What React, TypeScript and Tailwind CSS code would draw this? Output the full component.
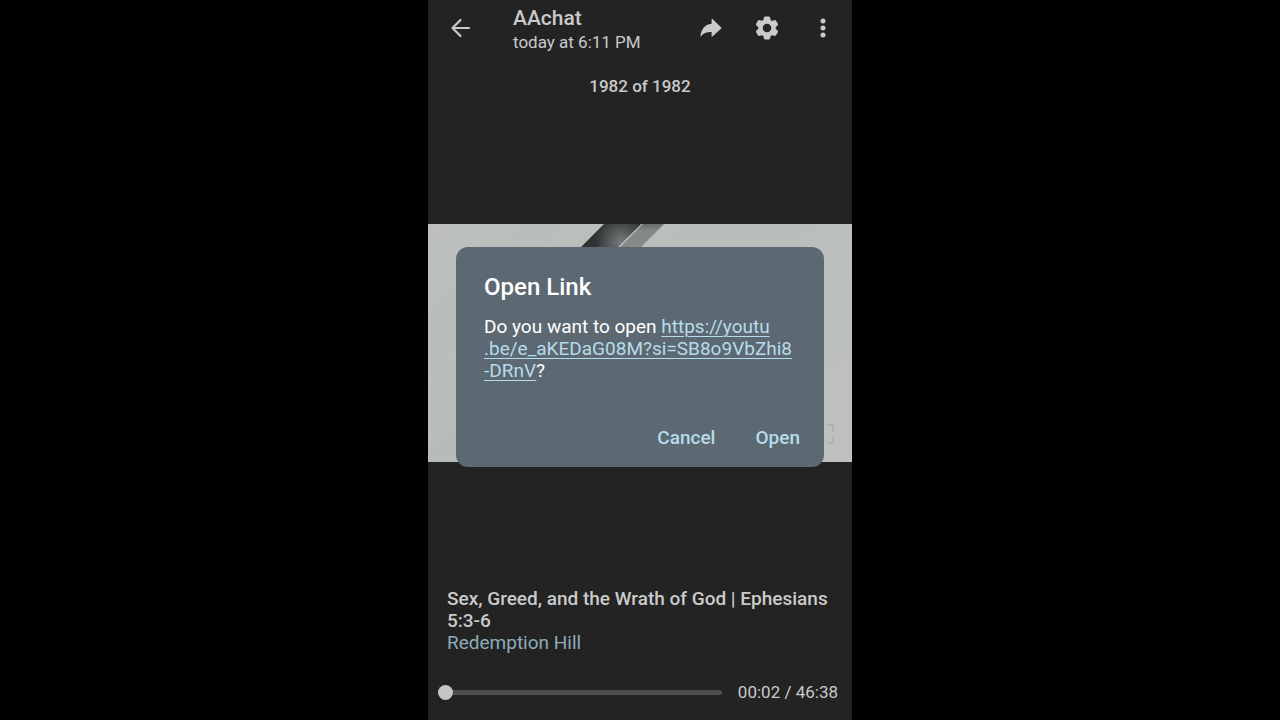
import { useState } from 'react';

const DURATION = 2798;

const formatTime = (seconds: number) => {
  const m = Math.floor(seconds / 60);
  const s = seconds % 60;
  return `${String(m).padStart(2, '0')}:${String(s).padStart(2, '0')}`;
};

function BackIcon() {
  return (
    <svg
      viewBox="0 0 24 24"
      className="w-6 h-6"
      fill="none"
      stroke="currentColor"
      strokeWidth="2.2"
      strokeLinecap="round"
      strokeLinejoin="round"
    >
      <path d="M21 12H4.5M12.5 4l-8 8 8 8" />
    </svg>
  );
}

function ForwardIcon() {
  return (
    <svg viewBox="0 0 24 24" className="w-6 h-6" fill="currentColor">
      <path d="M12.6 3.4v4.4C5.5 8.5 2.1 14 1.5 20c-.1.6.4.7.7.2C4.500 17 7.500 16 12.600 16v4.200c0 .5.5.7.9.4l8.700-8.100c.4-.3.4-.8 0-1.100L13.500 3c-.4-.3-.9-.1-.9.4z" />
    </svg>
  );
}

function SettingsIcon() {
  return (
    <svg viewBox="0 0 24 24" className="w-6 h-6" fill="currentColor" stroke="currentColor" strokeLinejoin="round">
      <circle cx="12" cy="12" r="6.5" fill="none" strokeWidth="4.4" />
      <g strokeWidth="3.4">
        <path d="M10.500 2.200h3l.6 2.800H9.900zM10.500 21.800h3l.6-2.800H9.900z" />
        <path d="M10.500 2.200h3l.6 2.800H9.900zM10.500 21.800h3l.6-2.800H9.900z" transform="rotate(60 12 12)" />
        <path d="M10.500 2.200h3l.6 2.800H9.900zM10.500 21.800h3l.6-2.800H9.900z" transform="rotate(120 12 12)" />
      </g>
    </svg>
  );
}

function MoreIcon() {
  return (
    <svg viewBox="0 0 24 24" className="w-6 h-6" fill="currentColor">
      <circle cx="12" cy="5" r="2.5" />
      <circle cx="12" cy="12" r="2.5" />
      <circle cx="12" cy="19" r="2.5" />
    </svg>
  );
}

// Opening frame of the video: a pale wall with a diagonal metal bar
function VideoFrame() {
  return (
    <svg viewBox="0 0 424 238" preserveAspectRatio="none" className="block w-full h-full">
      <defs>
        <linearGradient id="wall" x1="0" y1="0" x2="1" y2="1">
          <stop offset="0" stopColor="#bdc0bd" />
          <stop offset="0.4" stopColor="#b9bebb" />
          <stop offset="1" stopColor="#bfc1bf" />
        </linearGradient>
        <radialGradient id="shine" gradientUnits="userSpaceOnUse" cx="193" cy="18" r="26">
          <stop offset="0" stopColor="#777b7a" />
          <stop offset="1" stopColor="#2e3334" />
        </radialGradient>
        <linearGradient id="edge" x1="0" y1="0" x2="0" y2="1">
          <stop offset="0" stopColor="#686d6c" />
          <stop offset="0.12" stopColor="#858988" />
        </linearGradient>
      </defs>
      <rect width="424" height="238" fill="url(#wall)" />
      <path d="M0 90L90 0h50L0 150z" fill="#b6bebb" opacity="0.5" />
      <path d="M0 238v-12l28-30v42z" fill="#b1b8b6" opacity="0.4" />
      <path d="M176 0h38l-60 60h-38z" fill="url(#shine)" />
      <path d="M214 0h22l-60 60h-22z" fill="url(#edge)" />
      <path d="M214 0l-60 60" stroke="#d4d7d5" strokeWidth="1" />
    </svg>
  );
}

export default function App() {
  const [position, setPosition] = useState(2);
  const [open, setOpen] = useState(true);

  return (
    <div className="min-h-screen bg-black font-['Roboto',sans-serif]">
      <div className="relative mx-auto flex min-h-screen w-full max-w-[424px] flex-col bg-[#232323] text-[#cacaca]">
        <header className="flex h-14 items-center pl-5 pr-[17px]">
          <button type="button" aria-label="Back">
            <BackIcon />
          </button>
          <div className="ml-[41px] flex-1 pt-1">
            <h1 className="text-[21px] leading-6 font-medium">AAchat</h1>
            <p className="text-[17px] leading-6">today at 6:11 PM</p>
          </div>
          <div className="flex items-center gap-8">
            <button type="button" aria-label="Forward">
              <ForwardIcon />
            </button>
            <button type="button" aria-label="Settings">
              <SettingsIcon />
            </button>
            <button type="button" aria-label="More options">
              <MoreIcon />
            </button>
          </div>
        </header>

        <p className="h-14 pt-[18px] text-center text-[17px] leading-6 font-medium">1982 of 1982</p>

        <main className="flex flex-1 items-center">
          <div className="relative aspect-video w-full">
            <VideoFrame />
            <svg
              viewBox="0 0 24 24"
              className="absolute right-4 bottom-4 w-6 h-6"
              fill="none"
              stroke="#afb2b0"
              strokeWidth="2"
            >
              <path d="M3 9V3h6M15 3h6v6M21 15v6h-6M9 21H3v-6" />
            </svg>
          </div>
        </main>

        <footer className="pb-4">
          <div className="px-[19px] pt-[14px] pb-[26px] text-[19px] leading-[22px]">
            <h2 className="font-medium">Sex, Greed, and the Wrath of God | Ephesians 5:3-6</h2>
            <p className="text-[#8eabb9]">Redemption Hill</p>
          </div>
          <div className="flex items-center gap-4 pl-[10px] pr-[14px]">
            <input
              type="range"
              aria-label="Playback position"
              min={0}
              max={DURATION}
              value={position}
              onChange={(e) => setPosition(Number(e.target.value))}
              className="h-6 min-w-0 flex-1 appearance-none bg-transparent [&::-webkit-slider-runnable-track]:h-[5px] [&::-webkit-slider-runnable-track]:rounded-full [&::-webkit-slider-runnable-track]:bg-[#4d4d4d] [&::-webkit-slider-thumb]:-mt-[5px] [&::-webkit-slider-thumb]:h-[15px] [&::-webkit-slider-thumb]:w-[15px] [&::-webkit-slider-thumb]:appearance-none [&::-webkit-slider-thumb]:rounded-full [&::-webkit-slider-thumb]:bg-[#c4c4c4]"
            />
            <span className="text-[17px] leading-6">
              {formatTime(position)} / {formatTime(DURATION)}
            </span>
          </div>
        </footer>

        {open && (
          <div className="absolute inset-0 flex items-center justify-center px-7 pb-[6px]">
            <div
              role="dialog"
              aria-labelledby="dialog-title"
              className="w-full rounded-xl bg-[#5c6872] px-7 pt-6 pb-4 text-white"
            >
              <h2 id="dialog-title" className="text-2xl leading-8 font-medium">
                Open Link
              </h2>
              <p className="mt-[13px] text-[19px] leading-[22px]">
                Do you want to open{' '}
                <a
                  href="https://youtu.be/e_aKEDaG08M?si=SB8o9VbZhi8-DRnV"
                  className="text-[#b6dbe9] underline decoration-1 underline-offset-3"
                >
                  https://youtu
                  <wbr />
                  .be/e_aKEDaG08M?si=SB8o9VbZhi8
                  <wbr />
                  -DRnV
                </a>
                ?
              </p>
              <div className="-mr-1 mt-[43px] flex justify-end gap-10 text-[19px] leading-[26px] font-medium text-[#b6dbe9]">
                <button type="button" onClick={() => setOpen(false)}>
                  Cancel
                </button>
                <button type="button" onClick={() => setOpen(false)}>
                  Open
                </button>
              </div>
            </div>
          </div>
        )}
      </div>
    </div>
  );
}
